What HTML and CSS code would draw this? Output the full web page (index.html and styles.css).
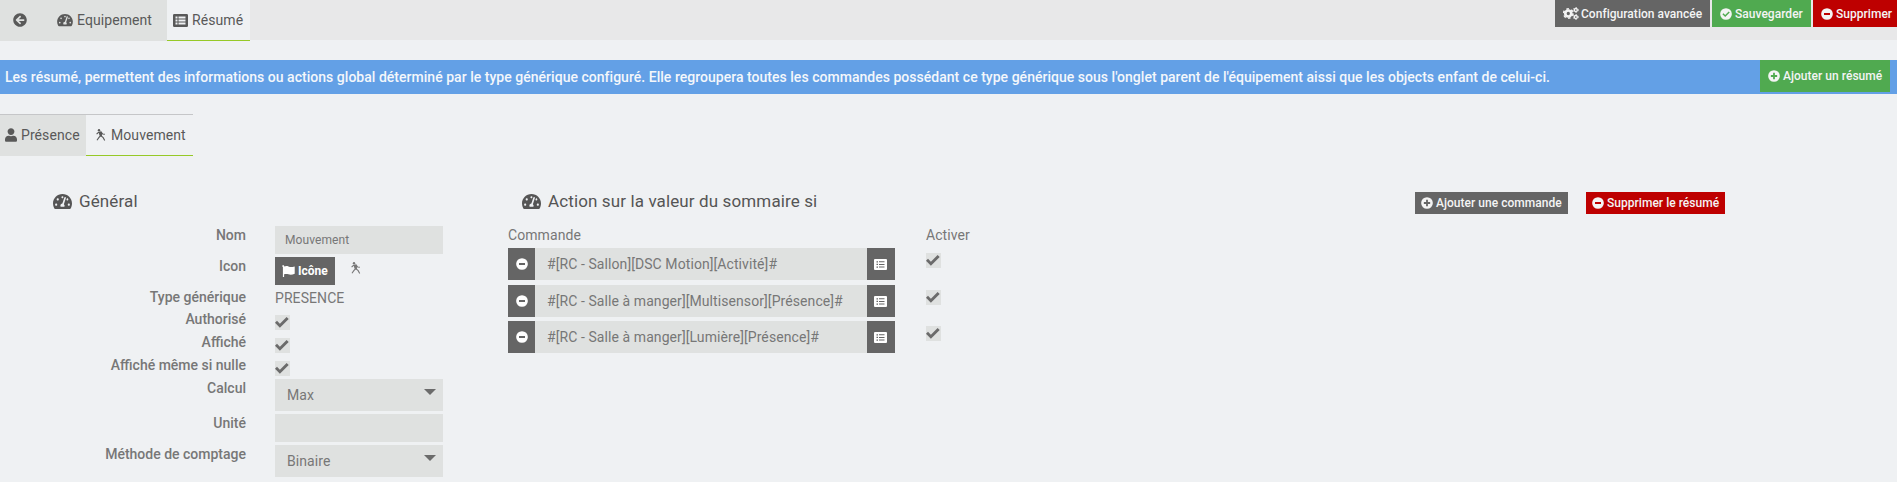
FILE: index.html
```html
<!DOCTYPE html>
<html lang="fr">
<head>
<meta charset="utf-8">
<title>Résumé</title>
<link rel="stylesheet" href="styles.css">
</head>
<body>
<svg class="sprite" aria-hidden="true">
  <symbol id="back" viewBox="0 0 512 512"><path d="M256 504C119 504 8 393 8 256S119 8 256 8s248 111 248 248-111 248-248 248zm28.900-143.600L209.400 288H392c13.300 0 24-10.700 24-24v-16c0-13.300-10.700-24-24-24H209.400l75.500-72.400c9.700-9.300 9.900-24.800.4-34.300l-11-10.900c-9.400-9.400-24.600-9.400-33.900 0L107.700 239c-9.400 9.400-9.400 24.600 0 33.900l132.700 132.700c9.400 9.400 24.600 9.400 33.900 0l11-10.900c9.500-9.500 9.300-25-.4-34.300z"/></symbol>
  <symbol id="gauge" viewBox="0 0 576 512"><path d="M288 32C128.940 32 0 160.940 0 320c0 52.800 14.250 102.260 39.060 144.800 5.610 9.620 16.300 15.200 27.440 15.200h443c11.140 0 21.830-5.580 27.440-15.200C561.750 422.260 576 372.800 576 320c0-159.060-128.940-288-288-288zm0 64c14.710 0 26.580 10.130 30.320 23.650-1.110 2.260-2.640 4.230-3.450 6.670l-9.220 27.670c-5.130 3.490-10.970 6.010-17.640 6.010-17.670 0-32-14.330-32-32S270.330 96 288 96zM96 384c-17.670 0-32-14.330-32-32s14.330-32 32-32 32 14.330 32 32-14.330 32-32 32zm48-160c-17.670 0-32-14.330-32-32s14.330-32 32-32 32 14.330 32 32-14.330 32-32 32zm246.770-72.410l-61.330 184C343.130 347.330 352 364.540 352 384c0 11.720-3.380 22.550-8.880 32H232.880c-5.500-9.450-8.880-20.280-8.880-32 0-33.940 26.500-61.430 59.900-63.590l61.340-184.010c4.170-12.560 17.730-19.450 30.360-15.170 12.570 4.190 19.350 17.790 15.170 30.360zm14.660 57.200l15.520-46.550c3.470-1.290 7.130-2.230 11.050-2.230 17.670 0 32 14.330 32 32s-14.330 32-32 32c-11.380-.01-20.890-6.280-26.570-15.220zM480 384c-17.670 0-32-14.330-32-32s14.330-32 32-32 32 14.330 32 32-14.330 32-32 32z"/></symbol>
  <symbol id="table" viewBox="0 0 15 13"><path fill-rule="evenodd" d="M1.300 0h12.400A1.300 1.300 0 0 1 15 1.300v10.400a1.300 1.300 0 0 1-1.300 1.300H1.300A1.300 1.300 0 0 1 0 11.700V1.300A1.300 1.300 0 0 1 1.300 0zM2.500 2.500v2h2v-2zM5.500 2.500v2h7v-2zM2.500 5.500v2h2v-2zM5.500 5.500v2h7v-2zM2.500 8.500v2h2v-2zM5.500 8.500v2h7v-2z"/></symbol>
  <symbol id="list" viewBox="0 0 13 11"><path fill-rule="evenodd" d="M1 0h11a1 1 0 0 1 1 1v9a1 1 0 0 1-1 1H1a1 1 0 0 1-1-1V1a1 1 0 0 1 1-1zM2.500 2.200v1.300H4V2.200zM5 2.300v1h5.500v-1zM2.500 4.800v1.300H4V4.800zM5 4.900v1h5.500v-1zM2.500 7.500v1.300H4V7.500zM5 7.600v1h5.500v-1z"/></symbol>
  <symbol id="user" viewBox="0 0 448 512"><path d="M224 256c70.700 0 128-57.300 128-128S294.700 0 224 0 96 57.300 96 128s57.300 128 128 128zm89.600 32h-16.700c-22.200 10.200-46.900 16-72.900 16s-50.600-5.800-72.900-16h-16.700C60.200 288 0 348.200 0 422.400V464c0 26.500 21.500 48 48 48h352c26.500 0 48-21.500 48-48v-41.600c0-74.200-60.200-134.400-134.400-134.400z"/></symbol>
  <symbol id="walker" viewBox="0 0 10 12"><circle cx="3" cy="1.300" r="1.200"/><path fill="none" stroke="currentColor" stroke-width="1.100" d="M.6 5.200 2.300 3.500 5 2.800 6.700 5l2.200.2M3.300 3.300 4.300 7 2.800 8.600 1 11.200M5.500 3.300 5.200 7l2 1.700L8.700 11.500"/><path d="M3 3.200 5.400 2.700 6 6.800 4.200 7.500z"/></symbol>
  <symbol id="minus" viewBox="0 0 16 16"><path fill-rule="evenodd" d="M8 .2a7.800 7.800 0 1 1 0 15.600A7.800 7.800 0 0 1 8 .2zM4 6.800v2.400h8V6.800z"/></symbol>
  <symbol id="plus" viewBox="0 0 16 16"><path fill-rule="evenodd" d="M8 .2a7.800 7.800 0 1 1 0 15.600A7.800 7.800 0 0 1 8 .2zM6.800 3.800v3h-3v2.400h3v3h2.400v-3h3V6.800h-3v-3z"/></symbol>
  <symbol id="ok" viewBox="0 0 16 16"><path fill-rule="evenodd" d="M8 .2a7.800 7.800 0 1 1 0 15.600A7.800 7.800 0 0 1 8 .2zM3.200 8.400l3.700 3.700 6.100-6.200-1.400-1.400-4.700 4.800L4.600 7z"/></symbol>
  <symbol id="cogs" viewBox="0 0 16 13"><g fill="none" stroke="currentColor"><circle cx="5.300" cy="6.500" r="3" stroke-width="2.700"/><circle cx="5.300" cy="6.500" r="4.700" stroke-width="1.600" stroke-dasharray="2.460 2.460"/><circle cx="12.800" cy="3" r="1.500" stroke-width="1.300"/><circle cx="12.800" cy="3" r="2.400" stroke-width="1" stroke-dasharray="1.250 1.260"/><circle cx="12.800" cy="10" r="1.500" stroke-width="1.300"/><circle cx="12.800" cy="10" r="2.400" stroke-width="1" stroke-dasharray="1.250 1.260"/></g></symbol>
  <symbol id="flag" viewBox="0 0 13 12"><path d="M.3.700a1 1 0 0 1 1.900.3v.6C3.500 1 5 .8 6.500 1.500c2 .9 3.300.7 6.200-.1v7.400c-2.500 1-4.300 1.200-6.300.5C4.800 8.700 3.500 8.800 2.100 9.300V12H.9V1.900A1 1 0 0 1 .3.700z"/></symbol>
  <symbol id="check" viewBox="0 0 14 11"><path d="M0 5.700 2 3.800l2.900 3L11.600 0l2.100 2L4.900 10.800z"/></symbol>
</svg>

<header class="topbar">
  <nav class="tabs">
    <a class="tab tab-back"><svg class="i14"><use href="#back"/></svg></a>
    <a class="tab tab-equip"><svg class="i-gauge"><use href="#gauge"/></svg><span>Equipement</span></a>
    <a class="tab tab-resume active"><svg class="i-table"><use href="#table"/></svg><span>Résumé</span></a>
  </nav>
  <div class="actions">
    <a class="btn w-config"><svg class="i-cogs"><use href="#cogs"/></svg><span>Configuration avancée</span></a>
    <a class="btn green w-save"><svg class="i12"><use href="#ok"/></svg><span>Sauvegarder</span></a>
    <a class="btn red w-del"><svg class="i12"><use href="#minus"/></svg><span>Supprimer</span></a>
  </div>
</header>

<div class="banner">
  <p>Les résumé, permettent des informations ou actions global déterminé par le type générique configuré. Elle regroupera toutes les commandes possédant ce type générique sous l'onglet parent de l'équipement aissi que les objects enfant de celui-ci.</p>
  <a class="btn green w-add"><svg class="i12"><use href="#plus"/></svg><span>Ajouter un résumé</span></a>
</div>

<nav class="subtabs">
  <a class="subtab s-pres"><svg class="i-user"><use href="#user"/></svg><span>Présence</span></a>
  <a class="subtab s-mouv active"><svg class="i-walk"><use href="#walker"/></svg><span>Mouvement</span></a>
</nav>

<main class="content">
  <section class="general">
    <h2 class="legend"><svg class="i-legend"><use href="#gauge"/></svg><span>Général</span></h2>
    <div class="form">
      <div class="row"><label>Nom</label><div class="input">Mouvement</div></div>
      <div class="row"><label>Icon</label><a class="btn w-icon"><svg class="i-flag"><use href="#flag"/></svg><b>Icône</b></a><svg class="i-walk chosen"><use href="#walker"/></svg></div>
      <div class="row short"><label>Type générique</label><span class="value">PRESENCE</span></div>
      <div class="row mid"><label>Authorisé</label><span class="box"><svg><use href="#check"/></svg></span></div>
      <div class="row mid"><label>Affiché</label><span class="box"><svg><use href="#check"/></svg></span></div>
      <div class="row mid"><label>Affiché même si nulle</label><span class="box"><svg><use href="#check"/></svg></span></div>
      <div class="row tall"><label>Calcul</label><div class="select">Max</div></div>
      <div class="row"><label>Unité</label><div class="input"></div></div>
      <div class="row tall"><label>Méthode de comptage</label><div class="select">Binaire</div></div>
    </div>
  </section>

  <section class="commands">
    <h2 class="legend"><svg class="i-legend"><use href="#gauge"/></svg><span>Action sur la valeur du sommaire si</span></h2>
    <div class="grid">
      <div class="head">Commande</div><div class="head">Activer</div>
      <div class="cmd"><a><svg class="i-min"><use href="#minus"/></svg></a><div class="cmd-text">#[RC - Sallon][DSC Motion][Activité]#</div><a class="pick"><svg class="i-list"><use href="#list"/></svg></a></div>
      <span class="box"><svg><use href="#check"/></svg></span>
      <div class="cmd"><a><svg class="i-min"><use href="#minus"/></svg></a><div class="cmd-text">#[RC - Salle à manger][Multisensor][Présence]#</div><a class="pick"><svg class="i-list"><use href="#list"/></svg></a></div>
      <span class="box"><svg><use href="#check"/></svg></span>
      <div class="cmd"><a><svg class="i-min"><use href="#minus"/></svg></a><div class="cmd-text">#[RC - Salle à manger][Lumière][Présence]#</div><a class="pick"><svg class="i-list"><use href="#list"/></svg></a></div>
      <span class="box"><svg><use href="#check"/></svg></span>
    </div>
  </section>

  <div class="side">
    <a class="btn w-cmd"><svg class="i12"><use href="#plus"/></svg><span>Ajouter une commande</span></a>
    <a class="btn red w-rm"><svg class="i12"><use href="#minus"/></svg><span>Supprimer le résumé</span></a>
  </div>
</main>
</body>
</html>
```
FILE: styles.css
```css
* { box-sizing: border-box; }
body { margin: 0; height: 482px; overflow: hidden; background: #eff1f3; color: #777; font: 14px/20px Roboto, sans-serif; letter-spacing: .08px; }
svg { display: block; flex: none; fill: currentColor; }
.sprite { position: absolute; width: 0; height: 0; }
span, b, p, label { white-space: nowrap; }

.topbar { display: flex; justify-content: space-between; height: 40px; background: #e8e8e9; }
.tabs { display: flex; height: 41px; color: #595959; }
.tab { display: flex; align-items: center; gap: 5px; height: 41px; background: #dfe1e0; border-bottom: 1px solid #dfe1e0; }
.tab-back { width: 40px; padding-left: 13px; }
.tab-equip { width: 127px; padding-left: 17px; gap: 4px; }
.tab-resume { width: 83px; padding-left: 6px; gap: 4px; }
.tab.active { background: #eff1f3; border-color: #96c927; }
.i14 { width: 14px; height: 14px; }
.i12 { width: 12px; height: 12px; }
.i-gauge { width: 16px; height: 14px; }
.i-table { width: 15px; height: 13px; }
.i-cogs { width: 16px; height: 13px; }
.i-user { width: 12px; height: 14px; }
.i-walk { width: 10px; height: 12px; }
.i-flag { width: 13px; height: 12px; }
.i-legend { width: 19px; height: 17px; }
.i-min { width: 12px; height: 12px; }
.i-list { width: 13px; height: 11px; }

.actions { display: flex; gap: 2px; }
.btn { display: flex; align-items: center; gap: 3px; height: 27px; padding-left: 8px; background: #656565; color: #f4f4f4; font-size: 12px; font-weight: 500; letter-spacing: .03px; }
.btn b { font-weight: 700; letter-spacing: 0; }
.green { background: #50aa50; }
.red { background: #be0000; }
.w-config { width: 155px; gap: 2px; }
.w-save { width: 99px; }
.w-del { width: 84px; }

.banner { display: flex; justify-content: space-between; height: 34px; margin-top: 20px; padding: 0 7px 0 5px; background: #63a0e6; color: #f4f7fb; }
.banner p { margin: 0; font-weight: 500; line-height: 34px; letter-spacing: .026px; }
.w-add { width: 130px; height: 32px; }

.subtabs { display: flex; height: 42px; margin-top: 20px; color: #595959; }
.subtab { display: flex; align-items: center; border-top: 1px solid #c5c6c8; border-bottom: 1px solid #dfe1e0; background: #dfe1e0; }
.s-pres { width: 86px; padding-left: 5px; gap: 4px; }
.s-mouv { width: 107px; padding-left: 10px; gap: 5px; }
.subtab.active { background: #eff1f3; border-bottom-color: #96c927; }

.content { display: flex; padding-top: 35px; }
.general { width: 508px; }
.legend { display: flex; align-items: center; gap: 7px; height: 20px; margin: 0 0 15px 53px; color: #555; font-size: 17px; font-weight: 400; letter-spacing: .12px; }
.form { display: flex; flex-direction: column; gap: 3px; }
.row { display: flex; height: 28px; }
.row label { width: 246px; margin-right: 29px; text-align: right; font-weight: 500; line-height: 19px; letter-spacing: 0; }
.row.short { height: 19px; }
.row.mid { height: 20px; }
.row.tall { height: 32px; }
.value { line-height: 20px; }
.input { width: 168px; height: 28px; padding-left: 10px; background: #dfe1e0; font-size: 12px; line-height: 29px; }
.select { display: flex; justify-content: space-between; width: 168px; height: 32px; padding: 0 7px 0 12px; background: #dfe1e0; line-height: 32px; }
.select::after { content: ""; height: 0; margin-top: 10px; border: 6px solid transparent; border-top-color: #6b6b6b; border-bottom: 0; }
.w-icon { width: 60px; height: 28px; padding-left: 7px; color: #fff; }
.chosen { margin: 5px 0 0 16px; }
.box { width: 15px; height: 15px; margin-top: 5px; background: #dfe1e0; color: #6b6b6b; }
.box svg { width: 14px; height: 11px; margin-top: 2px; }

.commands { width: 907px; }
.commands .legend { margin: 0 0 15px 14px; }
.grid { display: grid; grid-template-columns: 387px 100px; grid-template-rows: 26px 37px 36px 32px; column-gap: 31px; margin-top: -4px; }
.head { line-height: 27px; }
.cmd { display: flex; height: 32px; color: #fff; }
.cmd a { display: flex; align-items: center; justify-content: center; width: 27px; background: #656565; }
.cmd .pick { width: 28px; padding-right: 1px; }
.cmd-text { flex: 1; padding-left: 12px; background: #dfe1e0; color: #777; line-height: 33px; white-space: nowrap; }

.side { display: flex; gap: 18px; }
.side .btn { height: 22px; margin-top: 1px; padding-left: 6px; }
.w-cmd { width: 153px; }
.w-rm { width: 139px; }
```
